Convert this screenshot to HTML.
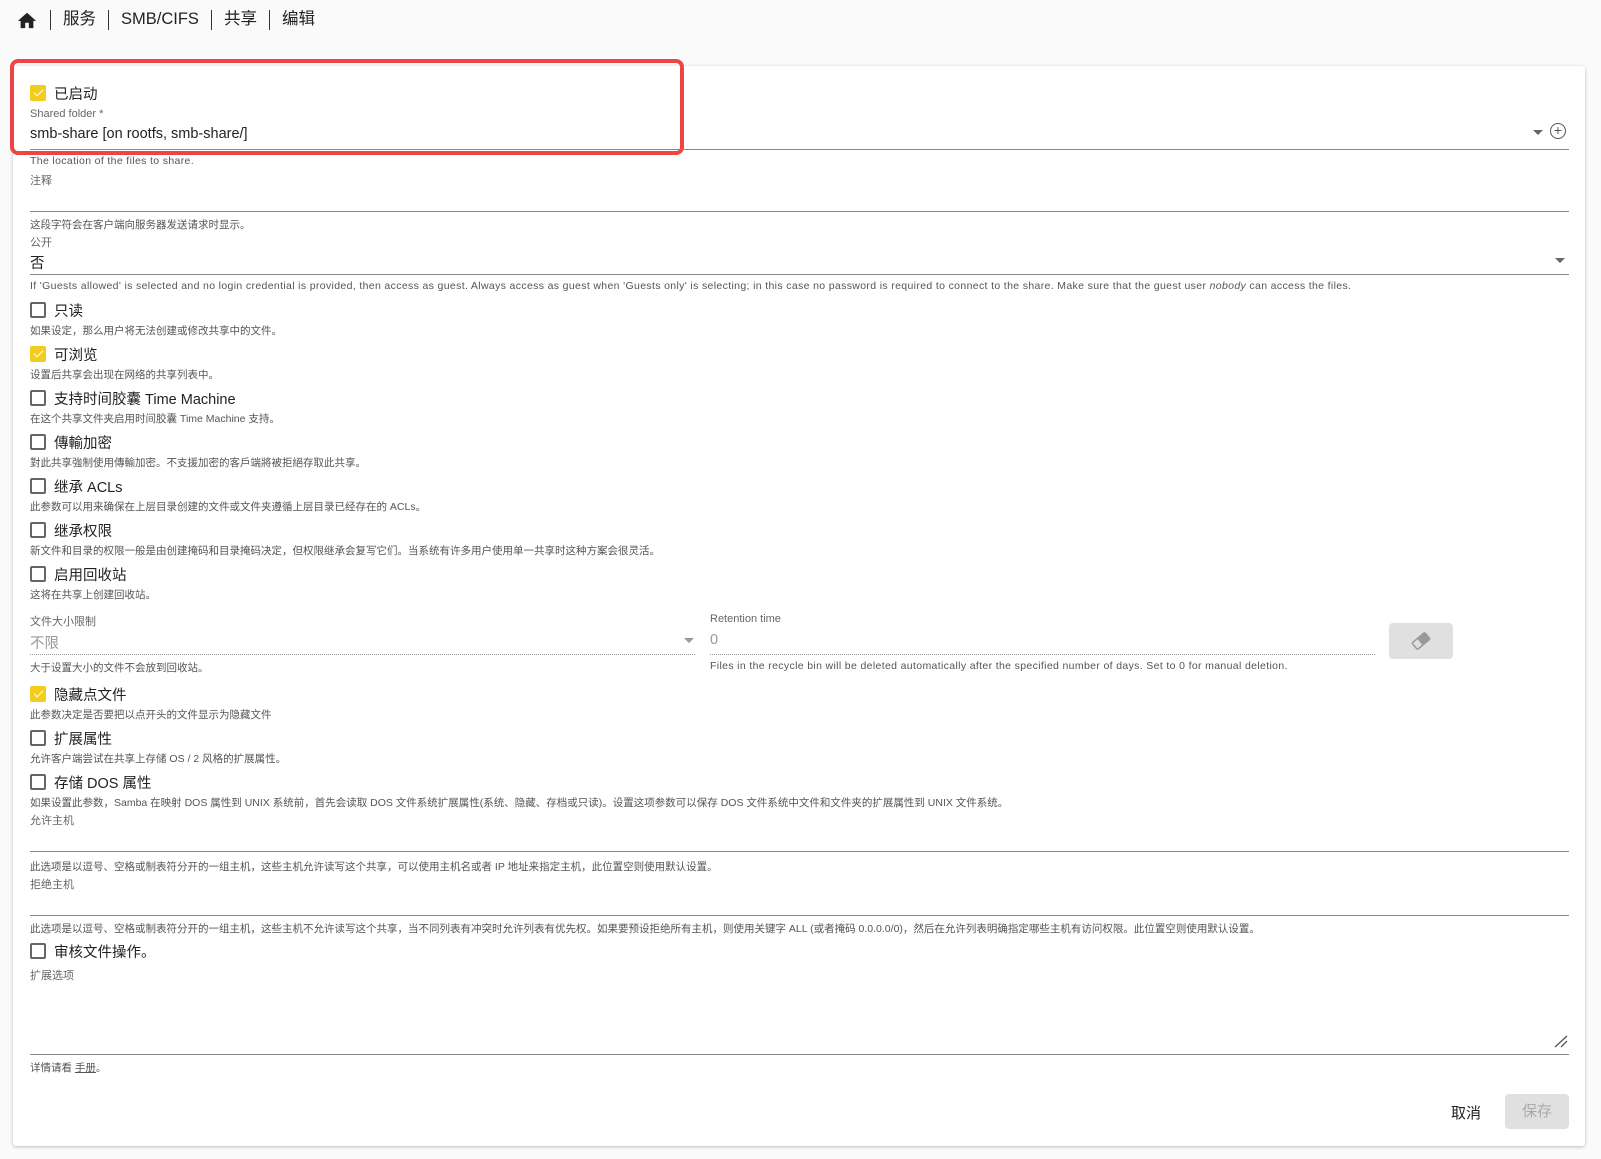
<!DOCTYPE html>
<html><head><meta charset="utf-8"><style>
*{margin:0;padding:0;box-sizing:border-box}
body{width:1601px;height:1159px;background:#fafafa;font-family:"Liberation Sans","Noto Sans CJK SC",sans-serif;color:#222;position:relative;overflow:hidden}
.a{position:absolute;white-space:nowrap}
.card{position:absolute;left:13px;top:66px;width:1572px;height:1080px;background:#fff;border-radius:3px;box-shadow:0 1px 3px rgba(0,0,0,.25)}
.lbl{font-size:11px;color:#666}
.hint{font-size:10.5px;color:#555}
.en{letter-spacing:.35px}
.val{font-size:14.5px;color:#222}
.ln{position:absolute;left:30px;width:1539px;height:1px;background:#888}
.cb{position:absolute;left:30px;width:16px;height:16px;border:2px solid #666;border-radius:2px}
.cb.on{background:#f2cd1b;border-color:#f2cd1b}
.cb.on:after{content:"";position:absolute;left:4px;top:0px;width:4px;height:8px;border:solid #fff;border-width:0 1.5px 1.5px 0;transform:rotate(45deg)}
.ct{font-size:14.5px;left:54px}
.sep{display:inline-block;width:1px;height:20px;background:#333;vertical-align:middle;margin:0 12px}
</style></head><body>
<div class="a" style="left:16px;top:7px;font-size:16.5px;line-height:24px;color:#222">
<svg width="22" height="20" viewBox="0 0 24 22" style="vertical-align:middle"><path d="M10 20v-6h4v6h5v-8h3L12 3 2 12h3v8z" fill="#222"/></svg><span class="sep"></span>服务<span class="sep"></span>SMB/CIFS<span class="sep"></span>共享<span class="sep"></span>编辑</div>
<div class="card"></div>
<div class="a" style="left:10px;top:59px;width:674px;height:96px;border:4px solid #ee4444;border-radius:8px"></div>

<div class="cb on" style="top:85px"></div><div class="a ct" style="top:83px">已启动</div>
<div class="a lbl" style="left:30px;top:108px">Shared folder *</div>
<div class="a val" style="left:30px;top:126px">smb-share [on rootfs, smb-share/]</div>
<div class="a" style="left:1533px;top:130px;width:0;height:0;border:5px solid transparent;border-top-color:#666"></div>
<div class="a" style="left:1550px;top:123px;width:16px;height:16px;border:1.5px solid #555;border-radius:50%;font-size:14px;line-height:12px;text-align:center;color:#555">+</div>
<div class="ln" style="top:149px"></div>
<div class="a hint en" style="left:30px;top:155px">The location of the files to share.</div>
<div class="a lbl" style="left:30px;top:172px">注释</div>
<div class="ln" style="top:211px"></div>
<div class="a hint" style="left:30px;top:217px">这段字符会在客户端向服务器发送请求时显示。</div>
<div class="a lbl" style="left:30px;top:234px">公开</div>
<div class="a val" style="left:30px;top:252px">否</div>
<div class="a" style="left:1555px;top:258px;width:0;height:0;border:5px solid transparent;border-top-color:#666"></div>
<div class="ln" style="top:274px"></div>
<div class="a hint en" style="left:30px;top:280px">If 'Guests allowed' is selected and no login credential is provided, then access as guest. Always access as guest when 'Guests only' is selecting; in this case no password is required to connect to the share. Make sure that the guest user <i>nobody</i> can access the files.</div>

<div class="cb" style="top:302px"></div><div class="a ct" style="top:300px">只读</div>
<div class="a hint" style="left:30px;top:323px">如果设定，那么用户将无法创建或修改共享中的文件。</div>
<div class="cb on" style="top:346px"></div><div class="a ct" style="top:344px">可浏览</div>
<div class="a hint" style="left:30px;top:367px">设置后共享会出现在网络的共享列表中。</div>
<div class="cb" style="top:390px"></div><div class="a ct" style="top:388px">支持时间胶囊 Time Machine</div>
<div class="a hint" style="left:30px;top:411px">在这个共享文件夹启用时间胶囊 Time Machine 支持。</div>
<div class="cb" style="top:434px"></div><div class="a ct" style="top:432px">傳輸加密</div>
<div class="a hint" style="left:30px;top:455px">對此共享強制使用傳輸加密。不支援加密的客戶端將被拒絕存取此共享。</div>
<div class="cb" style="top:478px"></div><div class="a ct" style="top:476px">继承 ACLs</div>
<div class="a hint" style="left:30px;top:499px">此参数可以用来确保在上层目录创建的文件或文件夹遵循上层目录已经存在的 ACLs。</div>
<div class="cb" style="top:522px"></div><div class="a ct" style="top:520px">继承权限</div>
<div class="a hint" style="left:30px;top:543px">新文件和目录的权限一般是由创建掩码和目录掩码决定，但权限继承会复写它们。当系统有许多用户使用单一共享时这种方案会很灵活。</div>
<div class="cb" style="top:566px"></div><div class="a ct" style="top:564px">启用回收站</div>
<div class="a hint" style="left:30px;top:587px">这将在共享上创建回收站。</div>

<div class="a lbl" style="left:30px;top:613px">文件大小限制</div>
<div class="a val" style="left:30px;top:632px;color:#999">不限</div>
<div class="a" style="left:684px;top:638px;width:0;height:0;border:5px solid transparent;border-top-color:#999"></div>
<div class="a" style="left:30px;top:654px;width:665px;border-top:1px dotted #999"></div>
<div class="a hint" style="left:30px;top:660px">大于设置大小的文件不会放到回收站。</div>
<div class="a lbl" style="left:710px;top:613px">Retention time</div>
<div class="a val" style="left:710px;top:632px;color:#999">0</div>
<div class="a" style="left:710px;top:654px;width:665px;border-top:1px dotted #999"></div>
<div class="a hint en" style="left:710px;top:660px">Files in the recycle bin will be deleted automatically after the specified number of days. Set to 0 for manual deletion.</div>
<div class="a" style="left:1389px;top:623px;width:64px;height:36px;background:#e0e0e0;border-radius:4px">
<svg width="64" height="36" viewBox="0 0 64 36"><g transform="rotate(-40 32 18)"><rect x="23" y="13" width="18" height="10" rx="2" fill="#999"/><rect x="24.5" y="14.5" width="6" height="7" fill="#e0e0e0"/></g></svg></div>

<div class="cb on" style="top:686px"></div><div class="a ct" style="top:684px">隐藏点文件</div>
<div class="a hint" style="left:30px;top:707px">此参数决定是否要把以点开头的文件显示为隐藏文件</div>
<div class="cb" style="top:730px"></div><div class="a ct" style="top:728px">扩展属性</div>
<div class="a hint" style="left:30px;top:751px">允许客户端尝试在共享上存储 OS / 2 风格的扩展属性。</div>
<div class="cb" style="top:774px"></div><div class="a ct" style="top:772px">存储 DOS 属性</div>
<div class="a hint" style="left:30px;top:795px">如果设置此参数，Samba 在映射 DOS 属性到 UNIX 系统前，首先会读取 DOS 文件系统扩展属性(系统、隐藏、存档或只读)。设置这项参数可以保存 DOS 文件系统中文件和文件夹的扩展属性到 UNIX 文件系统。</div>
<div class="a lbl" style="left:30px;top:812px">允许主机</div>
<div class="ln" style="top:851px"></div>
<div class="a hint" style="left:30px;top:859px">此选项是以逗号、空格或制表符分开的一组主机，这些主机允许读写这个共享，可以使用主机名或者 IP 地址来指定主机，此位置空则使用默认设置。</div>
<div class="a lbl" style="left:30px;top:876px">拒绝主机</div>
<div class="ln" style="top:915px"></div>
<div class="a hint" style="left:30px;top:921px">此选项是以逗号、空格或制表符分开的一组主机，这些主机不允许读写这个共享，当不同列表有冲突时允许列表有优先权。如果要预设拒绝所有主机，则使用关键字 ALL (或者掩码 0.0.0.0/0)，然后在允许列表明确指定哪些主机有访问权限。此位置空则使用默认设置。</div>
<div class="cb" style="top:943px"></div><div class="a ct" style="top:941px">审核文件操作。</div>
<div class="a lbl" style="left:30px;top:967px">扩展选项</div>
<svg class="a" style="left:1553px;top:1034px" width="16" height="14"><path d="M2 13L14 2M8 13L14 7" stroke="#555" stroke-width="1.3"/></svg>
<div class="ln" style="top:1054px"></div>
<div class="a hint" style="left:30px;top:1060px">详情请看 <u>手册</u>。</div>

<div class="a" style="left:1451px;top:1102px;font-size:15px;color:#222">取消</div>
<div class="a" style="left:1505px;top:1094px;width:64px;height:35px;background:#e0e0e0;border-radius:4px;font-size:15px;color:#aaa;text-align:center;line-height:35px">保存</div>
</body></html>
